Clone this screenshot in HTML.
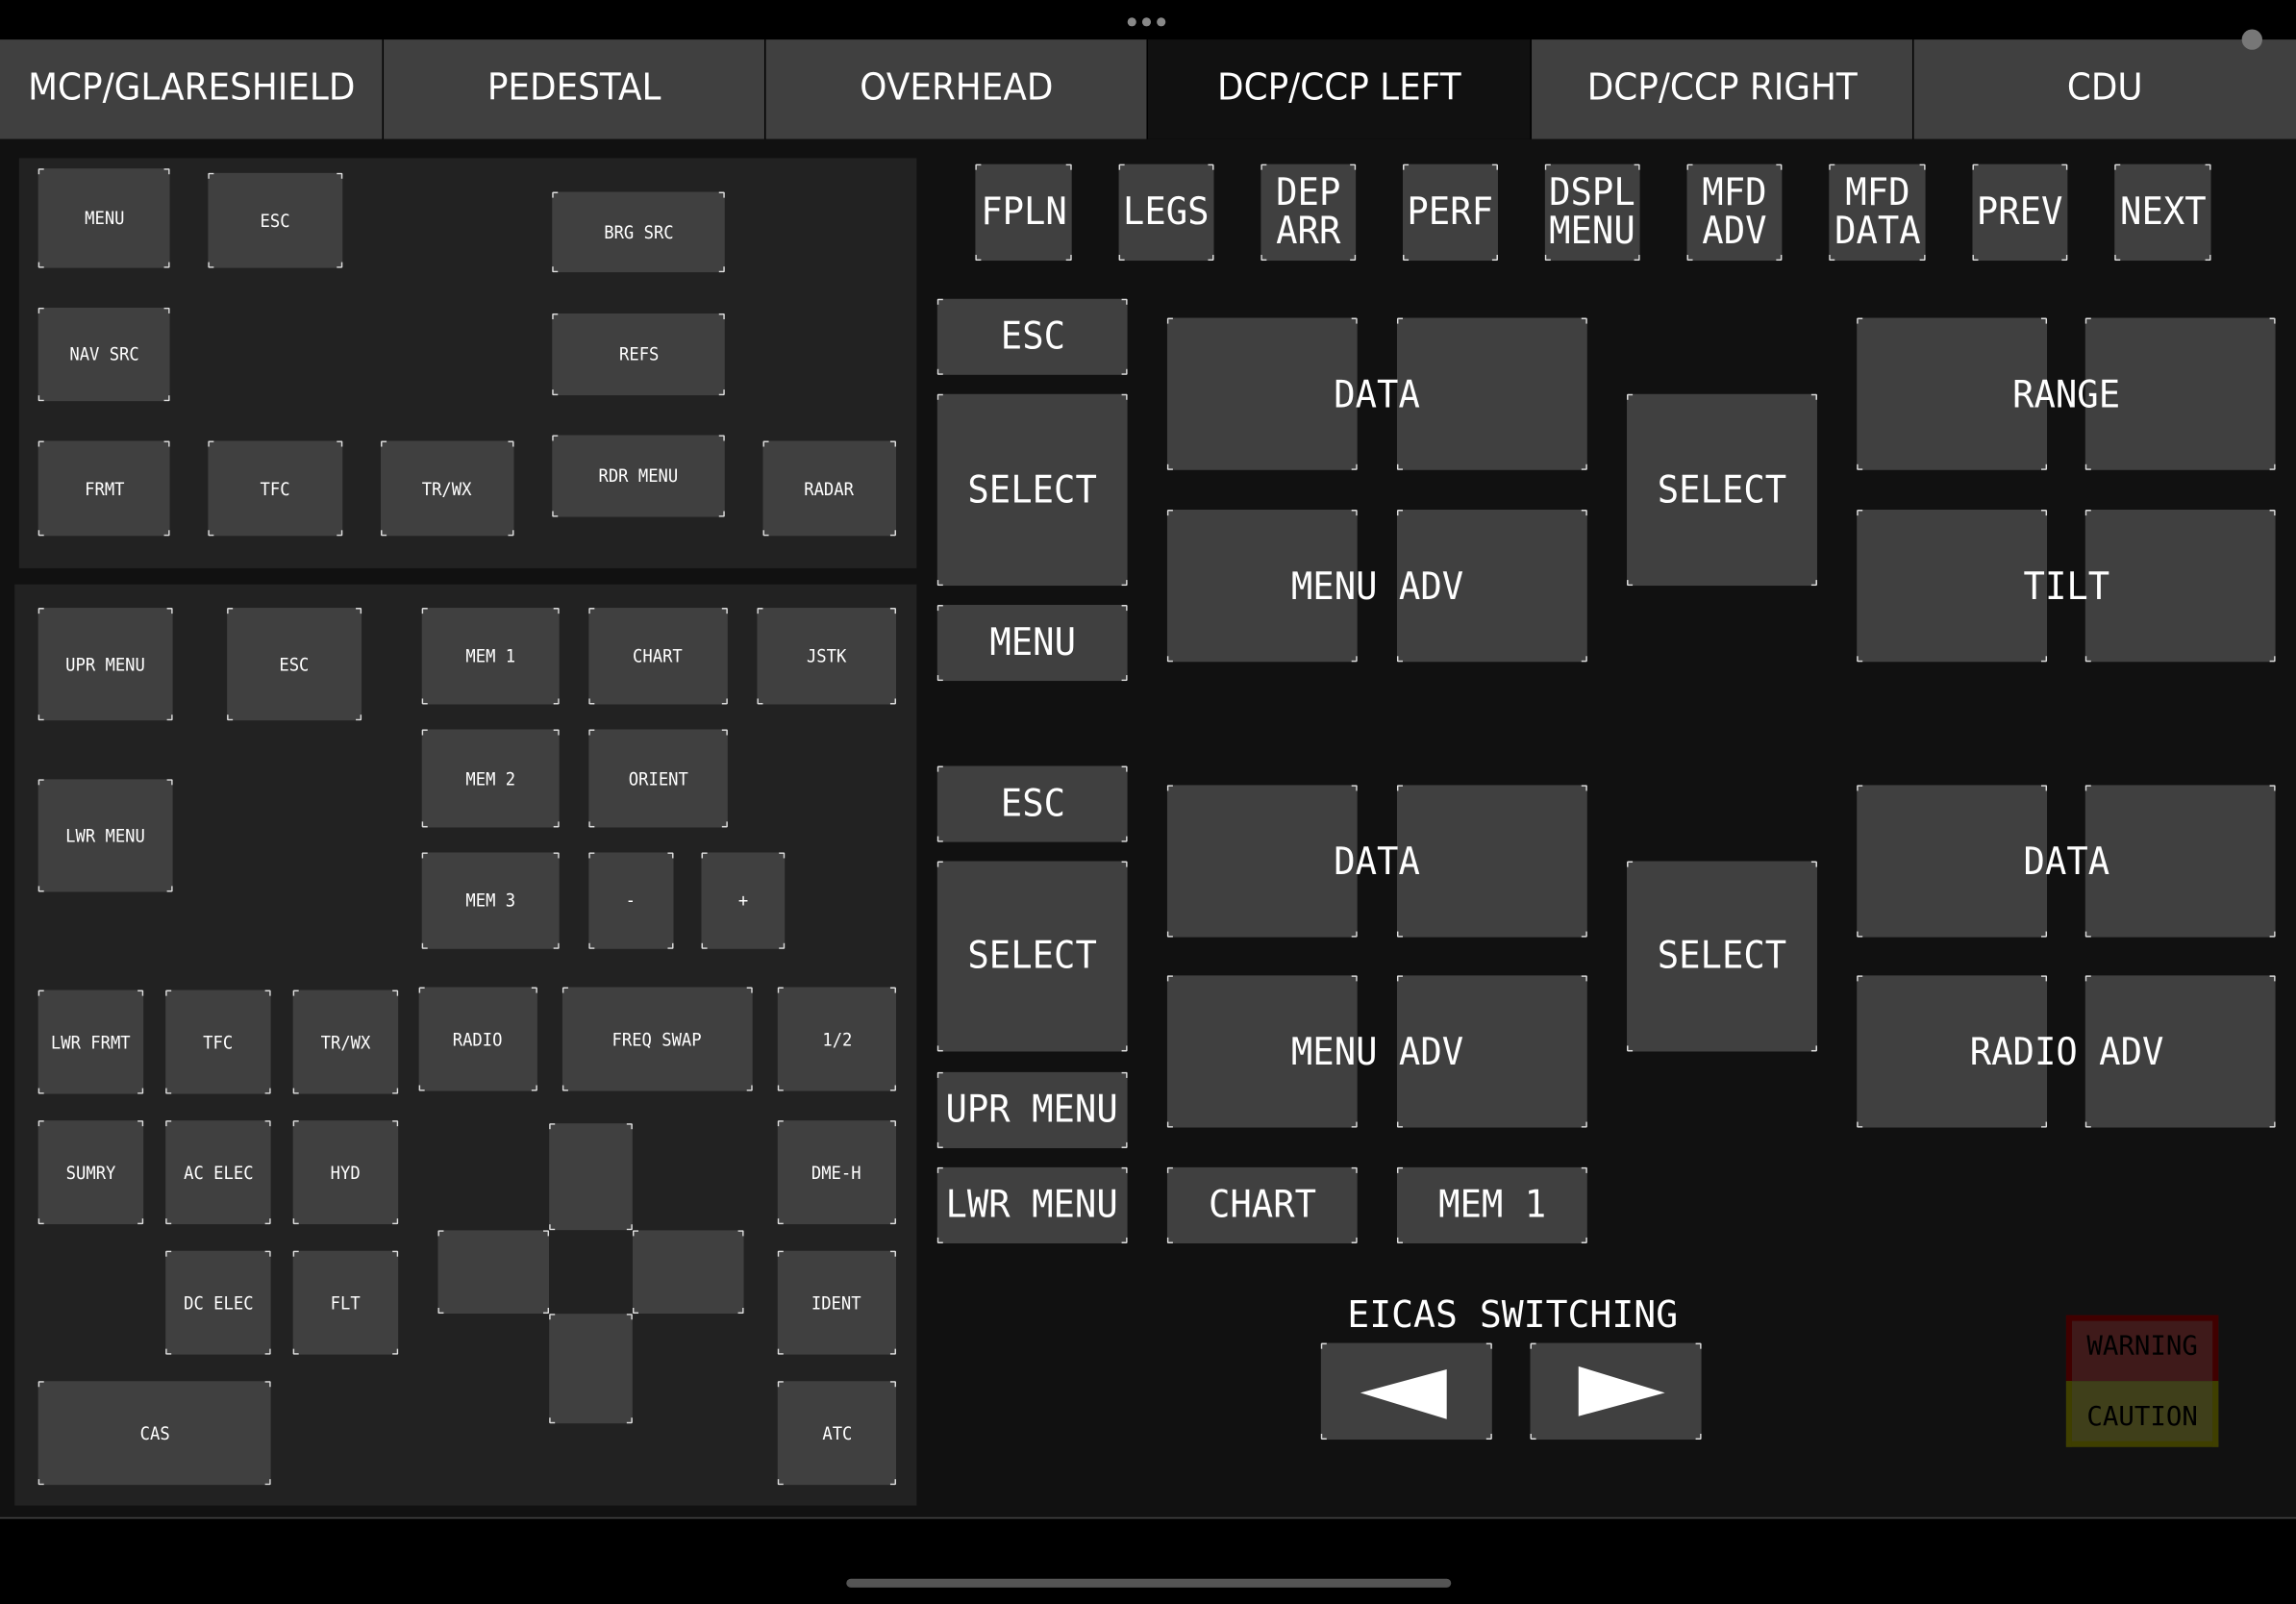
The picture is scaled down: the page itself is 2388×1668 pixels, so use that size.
<!DOCTYPE html>
<html><head><meta charset="utf-8"><style>
html,body{margin:0;padding:0;background:#000;width:2388px;height:1668px;overflow:hidden}
#w{position:absolute;left:0;top:0;width:1568px;height:1095px;transform:scale(1.52296);transform-origin:0 0;font-family:"DejaVu Sans Mono","Liberation Mono",monospace;color:#fff}
.a{position:absolute}
.tab{position:absolute;top:27px;height:68px;background:#404040;display:flex;align-items:center;justify-content:center;font-family:"DejaVu Sans","Liberation Sans",sans-serif;font-size:25px;padding-bottom:3px;box-sizing:border-box}
.tab i{font-style:normal;display:inline-block;transform:scaleX(.94);white-space:nowrap}
.b i{font-style:normal;display:inline-block;transform:scaleX(.94);white-space:nowrap;text-align:center}
.b{position:absolute;display:flex;align-items:center;justify-content:center;font-size:12px;line-height:1;
background:
linear-gradient(#ddd,#ddd) 0 0/4px 1px no-repeat,
linear-gradient(#ddd,#ddd) 0 0/1px 4px no-repeat,
linear-gradient(#ddd,#ddd) 100% 0/4px 1px no-repeat,
linear-gradient(#ddd,#ddd) 100% 0/1px 4px no-repeat,
linear-gradient(#ddd,#ddd) 0 100%/4px 1px no-repeat,
linear-gradient(#ddd,#ddd) 0 100%/1px 4px no-repeat,
linear-gradient(#ddd,#ddd) 100% 100%/4px 1px no-repeat,
linear-gradient(#ddd,#ddd) 100% 100%/1px 4px no-repeat,#404040;border-radius:1px}
.L{font-size:26px;line-height:1}
.t{position:absolute;font-size:26px;line-height:1;text-align:center;pointer-events:none}
.t i{font-style:normal;display:inline-block;transform:scaleX(.94);white-space:nowrap}
</style></head><body><div id="w">
<div class="a" style="left:770px;top:12px;width:6px;height:6px;border-radius:3px;background:#888"></div>
<div class="a" style="left:780px;top:12px;width:6px;height:6px;border-radius:3px;background:#888"></div>
<div class="a" style="left:790px;top:12px;width:6px;height:6px;border-radius:3px;background:#888"></div>

<div class="tab" style="left:0;width:261px"><i>MCP/GLARESHIELD</i></div>
<div class="tab" style="left:262px;width:260px"><i>PEDESTAL</i></div>
<div class="tab" style="left:523px;width:260px"><i>OVERHEAD</i></div>
<div class="tab" style="left:784px;width:261px;background:#111"><i>DCP/CCP LEFT</i></div>
<div class="tab" style="left:1046px;width:260px"><i>DCP/CCP RIGHT</i></div>
<div class="tab" style="left:1307px;width:261px"><i>CDU</i></div>
<div class="a" style="left:1531px;top:20px;width:14px;height:14px;border-radius:7px;background:#777"></div>

<div class="a" style="left:0;top:95px;width:1568px;height:941px;background:#111;border-bottom:1px solid #444"></div>
<div class="a" style="left:578px;top:1078px;width:413px;height:6px;border-radius:3px;background:#555"></div>

<div class="a" style="left:13px;top:108px;width:613px;height:280px;background:#222"></div>
<div class="a" style="left:10px;top:399px;width:616px;height:629px;background:#222"></div>

<div class="b" style="left:26px;top:115px;width:90px;height:68px"><i>MENU</i></div>
<div class="b" style="left:142px;top:118px;width:92px;height:65px"><i>ESC</i></div>
<div class="b" style="left:377px;top:131px;width:118px;height:55px"><i>BRG SRC</i></div>
<div class="b" style="left:26px;top:210px;width:90px;height:64px"><i>NAV SRC</i></div>
<div class="b" style="left:377px;top:214px;width:118px;height:56px"><i>REFS</i></div>
<div class="b" style="left:26px;top:301px;width:90px;height:65px"><i>FRMT</i></div>
<div class="b" style="left:142px;top:301px;width:92px;height:65px"><i>TFC</i></div>
<div class="b" style="left:260px;top:301px;width:91px;height:65px"><i>TR/WX</i></div>
<div class="b" style="left:377px;top:297px;width:118px;height:56px"><i>RDR MENU</i></div>
<div class="b" style="left:521px;top:301px;width:91px;height:65px"><i>RADAR</i></div>

<div class="b" style="left:26px;top:415px;width:92px;height:77px"><i>UPR MENU</i></div>
<div class="b" style="left:155px;top:415px;width:92px;height:77px"><i>ESC</i></div>
<div class="b" style="left:288px;top:415px;width:94px;height:66px"><i>MEM 1</i></div>
<div class="b" style="left:402px;top:415px;width:95px;height:66px"><i>CHART</i></div>
<div class="b" style="left:517px;top:415px;width:95px;height:66px"><i>JSTK</i></div>
<div class="b" style="left:26px;top:532px;width:92px;height:77px"><i>LWR MENU</i></div>
<div class="b" style="left:288px;top:498px;width:94px;height:67px"><i>MEM 2</i></div>
<div class="b" style="left:402px;top:498px;width:95px;height:67px"><i>ORIENT</i></div>
<div class="b" style="left:288px;top:582px;width:94px;height:66px"><i>MEM 3</i></div>
<div class="b" style="left:402px;top:582px;width:58px;height:66px"><i>-</i></div>
<div class="b" style="left:479px;top:582px;width:57px;height:66px"><i>+</i></div>

<div class="b" style="left:26px;top:676px;width:72px;height:71px"><i>LWR FRMT</i></div>
<div class="b" style="left:113px;top:676px;width:72px;height:71px"><i>TFC</i></div>
<div class="b" style="left:200px;top:676px;width:72px;height:71px"><i>TR/WX</i></div>
<div class="b" style="left:286px;top:674px;width:81px;height:71px"><i>RADIO</i></div>
<div class="b" style="left:384px;top:674px;width:130px;height:71px"><i>FREQ SWAP</i></div>
<div class="b" style="left:531px;top:674px;width:81px;height:71px"><i>1/2</i></div>
<div class="b" style="left:26px;top:765px;width:72px;height:71px"><i>SUMRY</i></div>
<div class="b" style="left:113px;top:765px;width:72px;height:71px"><i>AC ELEC</i></div>
<div class="b" style="left:200px;top:765px;width:72px;height:71px"><i>HYD</i></div>
<div class="b" style="left:531px;top:765px;width:81px;height:71px"><i>DME-H</i></div>
<div class="b" style="left:113px;top:854px;width:72px;height:71px"><i>DC ELEC</i></div>
<div class="b" style="left:200px;top:854px;width:72px;height:71px"><i>FLT</i></div>
<div class="b" style="left:531px;top:854px;width:81px;height:71px"><i>IDENT</i></div>
<div class="b" style="left:26px;top:943px;width:159px;height:71px"><i>CAS</i></div>
<div class="b" style="left:531px;top:943px;width:81px;height:71px"><i>ATC</i></div>

<div class="b" style="left:375px;top:767px;width:57px;height:73px"></div>
<div class="b" style="left:299px;top:840px;width:76px;height:57px"></div>
<div class="b" style="left:432px;top:840px;width:76px;height:57px"></div>
<div class="b" style="left:375px;top:897px;width:57px;height:75px"></div>

<div class="b L" style="left:666px;top:112px;width:66px;height:66px"><i>FPLN</i></div>
<div class="b L" style="left:764px;top:112px;width:65px;height:66px"><i>LEGS</i></div>
<div class="b L" style="left:861px;top:112px;width:65px;height:66px"><i>DEP<br>ARR</i></div>
<div class="b L" style="left:958px;top:112px;width:65px;height:66px"><i>PERF</i></div>
<div class="b L" style="left:1055px;top:112px;width:65px;height:66px"><i>DSPL<br>MENU</i></div>
<div class="b L" style="left:1152px;top:112px;width:65px;height:66px"><i>MFD<br>ADV</i></div>
<div class="b L" style="left:1249px;top:112px;width:66px;height:66px"><i>MFD<br>DATA</i></div>
<div class="b L" style="left:1347px;top:112px;width:65px;height:66px"><i>PREV</i></div>
<div class="b L" style="left:1444px;top:112px;width:66px;height:66px"><i>NEXT</i></div>

<div class="b L" style="left:640px;top:204px;width:130px;height:52px"><i>ESC</i></div>
<div class="b L" style="left:640px;top:269px;width:130px;height:131px"><i>SELECT</i></div>
<div class="b L" style="left:640px;top:413px;width:130px;height:52px"><i>MENU</i></div>
<div class="b" style="left:797px;top:217px;width:130px;height:104px"></div>
<div class="b" style="left:954px;top:217px;width:130px;height:104px"></div>
<div class="t" style="left:797px;top:257px;width:287px"><i>DATA</i></div>
<div class="b" style="left:797px;top:348px;width:130px;height:104px"></div>
<div class="b" style="left:954px;top:348px;width:130px;height:104px"></div>
<div class="t" style="left:797px;top:388px;width:287px"><i>MENU ADV</i></div>
<div class="b L" style="left:1111px;top:269px;width:130px;height:131px"><i>SELECT</i></div>
<div class="b" style="left:1268px;top:217px;width:130px;height:104px"></div>
<div class="b" style="left:1424px;top:217px;width:130px;height:104px"></div>
<div class="t" style="left:1268px;top:257px;width:286px"><i>RANGE</i></div>
<div class="b" style="left:1268px;top:348px;width:130px;height:104px"></div>
<div class="b" style="left:1424px;top:348px;width:130px;height:104px"></div>
<div class="t" style="left:1268px;top:388px;width:286px"><i>TILT</i></div>

<div class="b L" style="left:640px;top:523px;width:130px;height:52px"><i>ESC</i></div>
<div class="b L" style="left:640px;top:588px;width:130px;height:130px"><i>SELECT</i></div>
<div class="b L" style="left:640px;top:732px;width:130px;height:52px"><i>UPR MENU</i></div>
<div class="b L" style="left:640px;top:797px;width:130px;height:52px"><i>LWR MENU</i></div>
<div class="b" style="left:797px;top:536px;width:130px;height:104px"></div>
<div class="b" style="left:954px;top:536px;width:130px;height:104px"></div>
<div class="t" style="left:797px;top:576px;width:287px"><i>DATA</i></div>
<div class="b" style="left:797px;top:666px;width:130px;height:104px"></div>
<div class="b" style="left:954px;top:666px;width:130px;height:104px"></div>
<div class="t" style="left:797px;top:706px;width:287px"><i>MENU ADV</i></div>
<div class="b L" style="left:1111px;top:588px;width:130px;height:130px"><i>SELECT</i></div>
<div class="b" style="left:1268px;top:536px;width:130px;height:104px"></div>
<div class="b" style="left:1424px;top:536px;width:130px;height:104px"></div>
<div class="t" style="left:1268px;top:576px;width:286px"><i>DATA</i></div>
<div class="b" style="left:1268px;top:666px;width:130px;height:104px"></div>
<div class="b" style="left:1424px;top:666px;width:130px;height:104px"></div>
<div class="t" style="left:1268px;top:706px;width:286px"><i>RADIO ADV</i></div>
<div class="b L" style="left:797px;top:797px;width:130px;height:52px"><i>CHART</i></div>
<div class="b L" style="left:954px;top:797px;width:130px;height:52px"><i>MEM 1</i></div>

<div class="a" style="left:880px;top:885px;width:306px;text-align:center;font-size:25px;line-height:1">EICAS SWITCHING</div>
<div class="b" style="left:902px;top:917px;width:117px;height:66px"><svg width="117" height="66"><polygon points="27,34 86,18 86,52" fill="#fff"/></svg></div>
<div class="b" style="left:1045px;top:917px;width:117px;height:66px"><svg width="117" height="66"><polygon points="33,16 92,34 33,50" fill="#fff"/></svg></div>

<div class="a" style="left:1411px;top:898px;width:104px;height:45px;background:#3f1a1a;border:4px solid #400000;border-bottom:none;box-sizing:border-box"></div>
<div class="a" style="left:1411px;top:943px;width:104px;height:45px;background:#3f3f1a;border:4px solid #3f3f00;border-top:none;box-sizing:border-box"></div>
<div class="a" style="left:1411px;top:911px;width:104px;text-align:center;font-size:18px;color:#000;line-height:1">WARNING</div>
<div class="a" style="left:1411px;top:959px;width:104px;text-align:center;font-size:18px;color:#000;line-height:1">CAUTION</div>
</div></body></html>
